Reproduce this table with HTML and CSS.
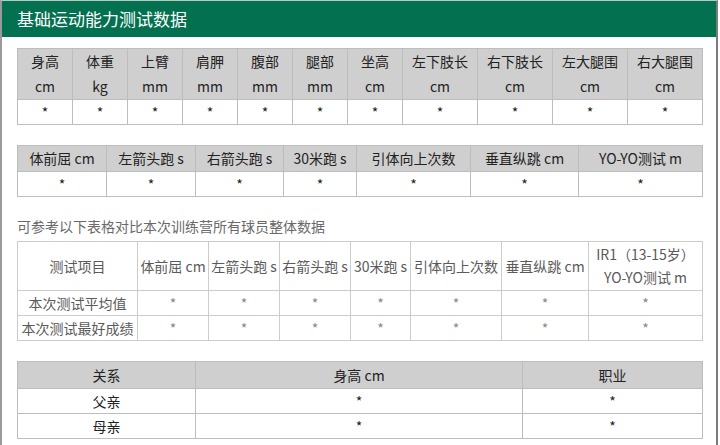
FILE: index.html
```html
<!DOCTYPE html>
<html lang="zh-CN">
<head>
<meta charset="utf-8">
<title>基础运动能力测试数据</title>
<link rel="stylesheet" href="styles.css">
</head>
<body>
<div class="page">
  <div class="title-bar">基础运动能力测试数据</div>
  <div class="content">
    <table class="grid t1">
      <colgroup>
        <col class="w55"><col class="w55"><col class="w55"><col class="w55"><col class="w55"><col class="w55"><col class="w55">
        <col class="w75"><col class="w75"><col class="w75"><col class="w75">
      </colgroup>
      <thead>
        <tr>
          <th>身高<br>cm</th><th>体重<br>kg</th><th>上臂<br>mm</th><th>肩胛<br>mm</th><th>腹部<br>mm</th><th>腿部<br>mm</th><th>坐高<br>cm</th><th>左下肢长<br>cm</th><th>右下肢长<br>cm</th><th>左大腿围<br>cm</th><th>右大腿围<br>cm</th>
        </tr>
      </thead>
      <tbody>
        <tr><td>*</td><td>*</td><td>*</td><td>*</td><td>*</td><td>*</td><td>*</td><td>*</td><td>*</td><td>*</td><td>*</td></tr>
      </tbody>
    </table>

    <table class="grid t2">
      <colgroup>
        <col style="width:89px"><col style="width:89px"><col style="width:88px"><col style="width:73px"><col style="width:114px"><col style="width:108px"><col style="width:124px">
      </colgroup>
      <thead>
        <tr><th>体前屈 cm</th><th>左箭头跑 s</th><th>右箭头跑 s</th><th>30米跑 s</th><th>引体向上次数</th><th>垂直纵跳 cm</th><th>YO-YO测试 m</th></tr>
      </thead>
      <tbody>
        <tr><td>*</td><td>*</td><td>*</td><td>*</td><td>*</td><td>*</td><td>*</td></tr>
      </tbody>
    </table>

    <p class="note">可参考以下表格对比本次训练营所有球员整体数据</p>

    <table class="grid t3">
      <colgroup>
        <col style="width:120px"><col style="width:71px"><col style="width:71px"><col style="width:71px"><col style="width:60px"><col style="width:91px"><col style="width:87px"><col style="width:114px">
      </colgroup>
      <thead>
        <tr><th>测试项目</th><th>体前屈 cm</th><th>左箭头跑 s</th><th>右箭头跑 s</th><th>30米跑 s</th><th>引体向上次数</th><th>垂直纵跳 cm</th><th>IR1（13-15岁）<br>YO-YO测试 m</th></tr>
      </thead>
      <tbody>
        <tr><td>本次测试平均值</td><td class="star">*</td><td class="star">*</td><td class="star">*</td><td class="star">*</td><td class="star">*</td><td class="star">*</td><td class="star">*</td></tr>
        <tr><td>本次测试最好成绩</td><td class="star">*</td><td class="star">*</td><td class="star">*</td><td class="star">*</td><td class="star">*</td><td class="star">*</td><td class="star">*</td></tr>
      </tbody>
    </table>

    <table class="grid t4">
      <colgroup>
        <col style="width:178px"><col style="width:327px"><col style="width:180px">
      </colgroup>
      <thead>
        <tr><th>关系</th><th>身高 cm</th><th>职业</th></tr>
      </thead>
      <tbody>
        <tr><td>父亲</td><td>*</td><td>*</td></tr>
        <tr><td>母亲</td><td>*</td><td>*</td></tr>
      </tbody>
    </table>
  </div>
</div>
</body>
</html>
```

FILE: styles.css
```css
html, body {
  margin: 0;
  padding: 0;
  background: #ffffff;
}

body {
  font-family: "Noto Sans CJK SC", "Open Sans", sans-serif;
  color: #222;
  width: 720px;
  height: 445px;
  overflow: hidden;
}

.page {
  width: 714px;
  height: 460px;
  border-left: 2px solid #9a9a9a;
  border-right: 2px solid #7c7c7c;
  border-top: 1px solid #b9c9c1;
  box-sizing: content-box;
}

.title-bar {
  background: #03704f;
  color: #fff;
  height: 36px;
  line-height: 36px;
  padding-left: 15px;
  font-size: 17px;
}

.content {
  padding: 11px 13px 0 15px;
}

.grid {
  border-collapse: collapse;
  table-layout: fixed;
  width: 685px;
  font-size: 14px;
}

.grid th,
.grid td {
  border: 1px solid #bdbdbd;
  padding: 0;
  text-align: center;
  font-weight: normal;
  white-space: nowrap;
  overflow: hidden;
}

.grid thead th {
  background: #cfcfcf;
  color: #222;
}

.w55 { width: 55px; }
.w75 { width: 75px; }

.t1 th {
  line-height: 25px;
  height: 49px;
}

.t1 td {
  height: 24px;
  line-height: 24px;
}

.t2 {
  margin-top: 20px;
}

.t2 th {
  height: 25px;
  line-height: 25px;
}

.t2 td {
  height: 24px;
  line-height: 24px;
}

.note {
  margin: 0;
  padding: 19px 0 5px;
  height: 20px;
  line-height: 20px;
  font-size: 14px;
  color: #6a6a6a;
}

.t3 {
  color: #5a5a5a;
}

.t3 th,
.t3 td {
  border-color: #cccccc;
}

.t3 thead th {
  background: #ffffff;
  color: #5a5a5a;
  height: 48px;
  line-height: 23px;
}

.t3 td {
  height: 24px;
  line-height: 24px;
  color: #5a5a5a;
}

.t3 td.star {
  color: #888;
}

.t4 {
  margin-top: 20px;
}

.t4 th {
  height: 26px;
  line-height: 26px;
}

.t4 td {
  height: 24px;
  line-height: 24px;
}
```
